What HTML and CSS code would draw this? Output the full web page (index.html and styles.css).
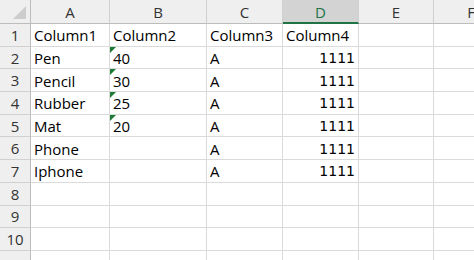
FILE: index.html
```html
<!doctype html>
<html lang="en">
<head>
    <meta charset="UTF-8">
    <title>Sheet1</title>
    <link rel="stylesheet" href="styles.css">
</head>
<body>
<div class="sheet">
    <div class="corner"><span class="corner-tri"></span></div>
    <div class="colhead">A</div>
    <div class="colhead">B</div>
    <div class="colhead">C</div>
    <div class="colhead active">D</div>
    <div class="colhead">E</div>
    <div class="colhead">F</div>

    <div class="rowhead">1</div>
    <div class="cell">Column1</div>
    <div class="cell">Column2</div>
    <div class="cell">Column3</div>
    <div class="cell">Column4</div>
    <div class="cell"></div>
    <div class="cell"></div>

    <div class="rowhead">2</div>
    <div class="cell">Pen</div>
    <div class="cell flag">40</div>
    <div class="cell">A</div>
    <div class="cell num">1111</div>
    <div class="cell"></div>
    <div class="cell"></div>

    <div class="rowhead">3</div>
    <div class="cell">Pencil</div>
    <div class="cell flag">30</div>
    <div class="cell">A</div>
    <div class="cell num">1111</div>
    <div class="cell"></div>
    <div class="cell"></div>

    <div class="rowhead">4</div>
    <div class="cell">Rubber</div>
    <div class="cell flag">25</div>
    <div class="cell">A</div>
    <div class="cell num">1111</div>
    <div class="cell"></div>
    <div class="cell"></div>

    <div class="rowhead">5</div>
    <div class="cell">Mat</div>
    <div class="cell flag">20</div>
    <div class="cell">A</div>
    <div class="cell num">1111</div>
    <div class="cell"></div>
    <div class="cell"></div>

    <div class="rowhead">6</div>
    <div class="cell">Phone</div>
    <div class="cell"></div>
    <div class="cell">A</div>
    <div class="cell num">1111</div>
    <div class="cell"></div>
    <div class="cell"></div>

    <div class="rowhead">7</div>
    <div class="cell">Iphone</div>
    <div class="cell"></div>
    <div class="cell">A</div>
    <div class="cell num">1111</div>
    <div class="cell"></div>
    <div class="cell"></div>

    <div class="rowhead">8</div>
    <div class="cell"></div><div class="cell"></div><div class="cell"></div>
    <div class="cell"></div><div class="cell"></div><div class="cell"></div>

    <div class="rowhead">9</div>
    <div class="cell"></div><div class="cell"></div><div class="cell"></div>
    <div class="cell"></div><div class="cell"></div><div class="cell"></div>

    <div class="rowhead">10</div>
    <div class="cell"></div><div class="cell"></div><div class="cell"></div>
    <div class="cell"></div><div class="cell"></div><div class="cell"></div>

    <div class="rowhead"></div>
    <div class="cell"></div><div class="cell"></div><div class="cell"></div>
    <div class="cell"></div><div class="cell"></div><div class="cell"></div>
</div>
</body>
</html>
```

FILE: styles.css
```css
* {
    margin: 0;
    padding: 0;
    box-sizing: border-box;
}

body {
    width: 474px;
    height: 260px;
    overflow: hidden;
    background-color: #fff;
    font-family: "Open Sans", "Liberation Sans", sans-serif;
    font-size: 15px;
    color: #111;
}

.sheet {
    display: grid;
    grid-template-columns: 31px 79px 97px 76px 76px 75px 75px;
    grid-template-rows: 24px repeat(11, 22.7px);
}

.corner,
.colhead,
.rowhead {
    background-color: #efefef;
    color: #333;
}

.corner {
    position: relative;
    border-right: 1px solid #bcbcbc;
    border-bottom: 1px solid #bcbcbc;
}

.corner-tri {
    position: absolute;
    right: 4px;
    bottom: 4px;
    width: 0;
    height: 0;
    border-left: 13px solid transparent;
    border-bottom: 13px solid #cdcdcd;
}

.colhead {
    display: flex;
    align-items: center;
    justify-content: center;
    border-right: 1px solid #d0d0d0;
    border-bottom: 1px solid #bcbcbc;
    padding-top: 1px;
}

.colhead.active {
    background-color: #d3d3d3;
    color: #217346;
    border-bottom: 2px solid #217346;
}

.rowhead {
    display: flex;
    align-items: center;
    justify-content: center;
    border-right: 1px solid #bcbcbc;
    border-bottom: 1px solid #d0d0d0;
}

.cell {
    position: relative;
    display: flex;
    align-items: center;
    padding: 1px 3px 0;
    border-right: 1px solid #dadada;
    border-bottom: 1px solid #dadada;
    white-space: nowrap;
    color: #000;
}

.cell.num {
    justify-content: flex-end;
    font-family: "DejaVu Sans", "Liberation Sans", sans-serif;
    font-size: 14px;
}

/* number stored as text */
.cell.flag::before {
    content: '';
    position: absolute;
    top: 0;
    left: 0;
    width: 0;
    height: 0;
    border-top: 6px solid #1f7a38;
    border-right: 6px solid transparent;
}
```
